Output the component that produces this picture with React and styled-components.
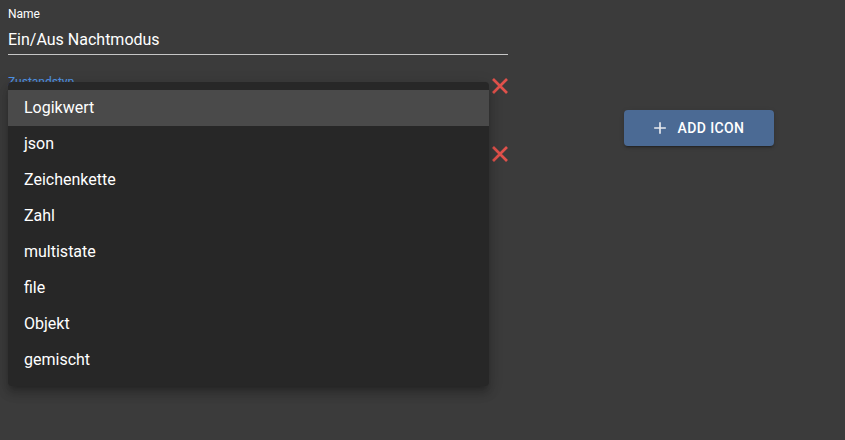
import React from "react";
import styled, { createGlobalStyle } from "styled-components";

const Global = createGlobalStyle`
  html, body { margin: 0; padding: 0; background: #3b3b3b; }
  body { font-family: Roboto, "Liberation Sans", Arial, sans-serif; color: #fff; }
  * { box-sizing: border-box; }
`;

const Page = styled.div`
  position: relative;
  width: 845px;
  height: 440px;
  padding: 8px;
  display: flex;
  align-items: flex-start;
  background: #3b3b3b;
  overflow: hidden;
`;

const LeftCol = styled.div`
  width: 504px;
  display: flex;
  flex-direction: column;
`;

const Field = styled.div`
  width: ${(p) => p.$width || 500}px;
  display: flex;
  flex-direction: column;
`;

const Label = styled.div`
  font-size: 12px;
  line-height: 12px;
  height: 12px;
  color: ${(p) => (p.$focused ? "#4f93e6" : "#ffffff")};
  white-space: nowrap;
`;

const Input = styled.div`
  margin-top: 4px;
  padding: 4px 0 3px;
  font-size: 16px;
  line-height: 23px;
  color: #fff;
  border-bottom: 1px solid ${(p) => (p.$focused ? "#4f93e6" : "#c6c6c6")};
  box-sizing: content-box;
  height: 23px;
`;

const Row = styled.div`
  display: flex;
  align-items: flex-start;
  margin-top: ${(p) => p.$mt || 0}px;
`;

const IconBtn = styled.button`
  width: 24px;
  height: 24px;
  padding: 0;
  margin-top: -2px;
  border: none;
  background: transparent;
  display: flex;
  align-items: center;
  justify-content: center;
  color: #e0514b;
  cursor: pointer;
  svg { width: 24px; height: 24px; flex: none; }
`;

const RightCol = styled.div`
  padding-left: 112px;
  padding-top: 102px;
`;

const AddButton = styled.button`
  width: 150px;
  height: 36px;
  border: none;
  border-radius: 4px;
  background: #4b6a94;
  color: #fff;
  font-family: Roboto, "Liberation Sans", Arial, sans-serif;
  font-size: 14px;
  font-weight: 500;
  letter-spacing: 0.4px;
  text-transform: uppercase;
  display: flex;
  align-items: center;
  justify-content: center;
  gap: 8px;
  box-shadow: 0 3px 1px -2px rgba(0,0,0,0.2), 0 2px 2px 0 rgba(0,0,0,0.14), 0 1px 5px 0 rgba(0,0,0,0.12);
  svg { width: 20px; height: 20px; margin-left: -4px; color: #e6e9ee; }
`;

const Menu = styled.ul`
  position: absolute;
  left: 8px;
  top: 82px;
  width: 481px;
  margin: 0;
  padding: 8px 0;
  list-style: none;
  background: #272727;
  border-radius: 4px;
  box-shadow: 0 5px 5px -3px rgba(0,0,0,0.2), 0 8px 10px 1px rgba(0,0,0,0.14), 0 3px 14px 2px rgba(0,0,0,0.12);
`;

const Item = styled.li`
  height: 36px;
  padding: 0 16px;
  display: flex;
  align-items: center;
  font-size: 16px;
  line-height: 24px;
  color: #fff;
  background: ${(p) => (p.$selected ? "#4a4a4a" : "transparent")};
`;

const CloseIcon = () => (
  <svg viewBox="0 0 24 24" fill="none" stroke="currentColor" strokeWidth="2.7">
    <path d="M5 5 19 19M19 5 5 19" />
  </svg>
);

const AddIcon = () => (
  <svg viewBox="0 0 24 24" fill="currentColor">
    <path d="M19 13h-6v6h-2v-6H5v-2h6V5h2v6h6z" />
  </svg>
);

const options = ["Logikwert", "json", "Zeichenkette", "Zahl", "multistate", "file", "Objekt", "gemischt"];

export default function App() {
  return (
    <>
      <Global />
      <Page>
        <LeftCol>
          <Field>
            <Label>Name</Label>
            <Input>Ein/Aus Nachtmodus</Input>
          </Field>
          <Row $mt={21}>
            <Field $width={480}>
              <Label $focused>Zustandstyp</Label>
              <Input $focused />
            </Field>
            <IconBtn aria-label="remove"><CloseIcon /></IconBtn>
          </Row>
          <Row $mt={21}>
            <Field $width={480}>
              <Label />
              <Input />
            </Field>
            <IconBtn aria-label="remove"><CloseIcon /></IconBtn>
          </Row>
        </LeftCol>
        <RightCol>
          <AddButton><AddIcon />Add icon</AddButton>
        </RightCol>
        <Menu>
          {options.map((o, i) => (
            <Item key={o} $selected={i === 0}>{o}</Item>
          ))}
        </Menu>
      </Page>
    </>
  );
}
